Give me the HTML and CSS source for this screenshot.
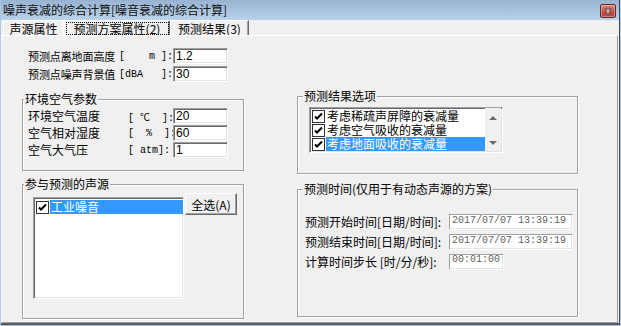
FILE: index.html
```html
<!DOCTYPE html>
<html lang="zh-CN">
<head>
  <meta charset="UTF-8" />
  <title>噪声衰减的综合计算</title>
  <link rel="stylesheet" href="styles.css">
</head>
<body>
  <div class="window">
    <div class="frame">
      <div class="titlebar">
        <span class="title">噪声衰减的综合计算[噪音衰减的综合计算]</span>
        <button class="close-btn" title="关闭">
          <svg viewBox="0 0 16 14" width="16" height="14">
            <path d="M5 4h2l1 1.5L9 4h2l-2 3 2 3H9L8 8.5 7 10H5l2-3z" fill="#fff" stroke="#3a2020" stroke-width="0.8"/>
          </svg>
        </button>
      </div>

      <div class="tabs">
        <div class="tab tab-1">声源属性</div>
        <div class="tab tab-2 active"><span class="focus">预测方案属性(2)</span></div>
        <div class="tab tab-3">预测结果(3)</div>
      </div>

      <div class="panel">
        <!-- 左列 -->
        <div class="col col-left">
          <div class="fields fields-top">
            <span class="name">预测点离地面高度</span><span class="unit">[    m ]:</span><input class="edit" value="1.2" readonly>
            <span class="name">预测点噪声背景值</span><span class="unit">[dBA   ]:</span><input class="edit" value="30" readonly>
          </div>

          <fieldset class="group group-air">
            <legend>环境空气参数</legend>
            <div class="fields fields-air">
              <span class="name">环境空气温度</span><span class="unit">[ ℃  ]:</span><input class="edit" value="20" readonly>
              <span class="name">空气相对湿度</span><span class="unit">[  %  ]:</span><input class="edit" value="60" readonly>
              <span class="name">空气大气压</span><span class="unit">[ atm]:</span><input class="edit" value="1" readonly>
            </div>
          </fieldset>

          <fieldset class="group group-src">
            <legend>参与预测的声源</legend>
            <div class="src-body">
              <div class="listbox src-list">
                <div class="item">
                  <span class="check"><svg viewBox="0 0 11 11"><path d="M2 5.5l2 2 5-5"/></svg></span>
                  <span class="text selected">工业噪音</span>
                </div>
              </div>
              <button class="btn">全选(A)</button>
            </div>
          </fieldset>
        </div>

        <!-- 右列 -->
        <div class="col col-right">
          <fieldset class="group group-res">
            <legend>预测结果选项</legend>
            <div class="listbox res-list">
              <div class="items">
                <div class="item">
                  <span class="check"><svg viewBox="0 0 11 11"><path d="M2 5.5l2 2 5-5"/></svg></span>
                  <span class="text">考虑稀疏声屏障的衰减量</span>
                </div>
                <div class="item">
                  <span class="check"><svg viewBox="0 0 11 11"><path d="M2 5.5l2 2 5-5"/></svg></span>
                  <span class="text">考虑空气吸收的衰减量</span>
                </div>
                <div class="item">
                  <span class="check"><svg viewBox="0 0 11 11"><path d="M2 5.5l2 2 5-5"/></svg></span>
                  <span class="text selected">考虑地面吸收的衰减量</span>
                </div>
              </div>
              <div class="scrollbar">
                <span class="arrow arrow-up"></span>
                <span class="arrow arrow-down"></span>
              </div>
            </div>
          </fieldset>

          <fieldset class="group group-time">
            <legend>预测时间(仅用于有动态声源的方案)</legend>
            <div class="time-rows">
              <span class="tname">预测开始时间[日期/时间]:</span><input class="edit date" value="2017/07/07 13:39:19" readonly>
              <span class="tname">预测结束时间[日期/时间]:</span><input class="edit date" value="2017/07/07 13:39:19" readonly>
              <span class="tname">计算时间步长 [时/分/秒]:</span><input class="edit date short" value="00:01:00" readonly>
            </div>
          </fieldset>
        </div>
      </div>
    </div>
  </div>
</body>
</html>
```

FILE: styles.css
```css
* { box-sizing: border-box; margin: 0; padding: 0; }
body {
  width: 621px; height: 326px; overflow: hidden;
  background: #f0f0f0; color: #000;
  font: 12px/14px "Noto Sans CJK SC", "Liberation Sans", sans-serif;
}

/* 窗口外框 */
.window {
  width: 621px; height: 326px;
  border-left: 1px solid #a9c9ea; border-right: 1px solid #b4d0ec;
  border-bottom: 1px solid #9dbddf;
}
.frame {
  height: 100%;
  display: flex; flex-direction: column;
  border-right: 1px solid #464646; border-bottom: 2px solid #5c5c5c;
}

/* 标题栏 */
.titlebar {
  height: 20px; flex: none;
  display: flex; align-items: center; justify-content: space-between;
  padding: 0 3px 0 2px;
  background: linear-gradient(#98b3d1, #bad2ea);
}
.title { color: #111; line-height: 16px; }
.close-btn {
  width: 16px; height: 14px; margin-top: 1px;
  border: 1px solid #5e2a2a; border-radius: 2px;
  background: linear-gradient(#dc8b82, #c04f45 55%, #b0443b);
  box-shadow: inset 0 0 0 1px rgba(255,255,255,0.35);
  display: flex; align-items: center; justify-content: center;
}
.close-btn svg { display: block; }

/* 选项卡 */
.tabs {
  height: 15px; flex: none;
  display: flex; align-items: stretch;
  padding-left: 2px;
}
.tab {
  display: flex; align-items: center; justify-content: center;
  border-top: 1px solid #fff; border-left: 1px solid #fff;
  border-right: 1px solid #696969;
  box-shadow: inset -1px 0 0 #a0a0a0;
  line-height: 13px;
}
.tab-1 { width: 60px; border-right: none; box-shadow: none; }
.tab-2 { width: 107px; }
.tab-3 { width: 79px; }
.tab .focus {
  display: block; width: 103px; height: 13px; margin-left: 1px;
  border: 1px dotted #000;
  text-align: center; line-height: 11px;
}

/* 面板 */
.panel {
  flex: 1;
  display: flex;
  border: 1px solid; border-color: #fff #a0a0a0 #a0a0a0 #fff;
  margin-right: 1px;
  padding-left: 20px;
}
.col { display: flex; flex-direction: column; }
.col-left { width: 222px; padding-bottom: 3px; }
.col-right { width: 281px; margin-left: 53px; padding-top: 53px; padding-bottom: 5px; }

/* 分组框 */
.group {
  border: 1px solid #a0a0a0;
  box-shadow: 1px 1px 0 #fff, inset 1px 1px 0 #fff;
  min-width: 0;
}
.group legend {
  background: #f0f0f0;
  padding: 0 1px; line-height: 14px;
}

/* 字段行 */
.fields {
  display: grid;
  grid-auto-rows: 16px;
  align-items: center;
}
.name { white-space: nowrap; }
.fields-top {
  margin: 12px 0 0 6px;
  grid-template-columns: 91px 54px 55px;
  row-gap: 2px;
}
.fields-top .name { font-size: 11px; letter-spacing: -0.1px; }
.fields-air {
  grid-template-columns: 100px 45px 55px;
  row-gap: 1px;
}
.unit {
  font: 10px "Liberation Mono", "Noto Sans CJK SC", monospace;
  white-space: pre;
}
.edit {
  height: 16px; width: 100%;
  background: #fff; color: #000;
  border: 1px solid; border-color: #a0a0a0 #fff #fff #a0a0a0;
  box-shadow: inset 1px 1px 0 #696969, inset -1px -1px 0 #e3e3e3;
  font: 12px "Liberation Sans", sans-serif;
  padding: 0 2px; outline: none;
}

.group-air { margin-top: 10px; padding: 2px 0 12px 5px; }
.group-air legend { margin-left: -4px; }

.group-src { margin-top: 6px; flex: 1; padding: 2px 0 0 10px; }
.group-src legend { margin-left: -9px; }
.src-body { display: flex; align-items: flex-start; }

/* 列表框 */
.listbox {
  background: #fff;
  border: 1px solid; border-color: #a0a0a0 #fff #fff #a0a0a0;
  box-shadow: inset 1px 1px 0 #696969, inset -1px -1px 0 #e3e3e3;
  padding: 2px 0 0 2px;
}
.src-list { width: 151px; height: 102px; margin-top: 4px; }
.item { height: 14px; display: flex; align-items: center; }
.check {
  width: 13px; height: 13px; flex: none;
  border: 1px solid #333; background: #fff;
  display: flex; align-items: center; justify-content: center;
}
.check svg { width: 11px; height: 11px; fill: none; stroke: #000; stroke-width: 2; }
.item .text {
  flex: 1; height: 14px;
  margin-left: 1px; padding-left: 1px;
  line-height: 14px; white-space: nowrap;
}
.item .selected { background: #3399ff; color: #fff; }

.btn {
  width: 52px; height: 22px; margin-left: 1px;
  background: #f0f0f0;
  border: 1px solid; border-color: #fff #696969 #696969 #fff;
  box-shadow: inset -1px -1px 0 #a0a0a0;
  font: 12px "Noto Sans CJK SC", sans-serif;
}

/* 右列 */
.group-res { padding: 4px 0 20px 11px; }
.group-res legend { margin-left: -6px; }
.res-list {
  width: 194px; height: 46px;
  display: flex; padding: 1px 0 0 2px;
}
.items { flex: 1; }
.scrollbar {
  width: 16px; margin: -1px 1px 1px 0;
  background: #f0f0f0;
  display: flex; flex-direction: column; justify-content: space-between; align-items: center;
  padding: 8px 0 6px;
}
.arrow { width: 0; height: 0; border-left: 4px solid transparent; border-right: 4px solid transparent; }
.arrow-up { border-bottom: 4px solid #6b6b6b; }
.arrow-down { border-top: 4px solid #6b6b6b; }

.group-time { margin-top: 8px; flex: 1; padding: 18px 0 0 7px; }
.group-time legend { margin-left: -2px; }
.time-rows {
  display: grid;
  grid-template-columns: 144px 124px;
  grid-auto-rows: 16px; row-gap: 4px;
  align-items: center;
}
.tname { white-space: pre; }
.date {
  font: 10px "Liberation Mono", monospace;
  color: #5f5f5f;
  border-color: #a0a0a0 #fff #fff #a0a0a0;
  box-shadow: inset -1px -1px 0 #e3e3e3;
  padding: 0 2px 3px;
}
.date.short { width: 55px; padding-bottom: 5px; }
```
